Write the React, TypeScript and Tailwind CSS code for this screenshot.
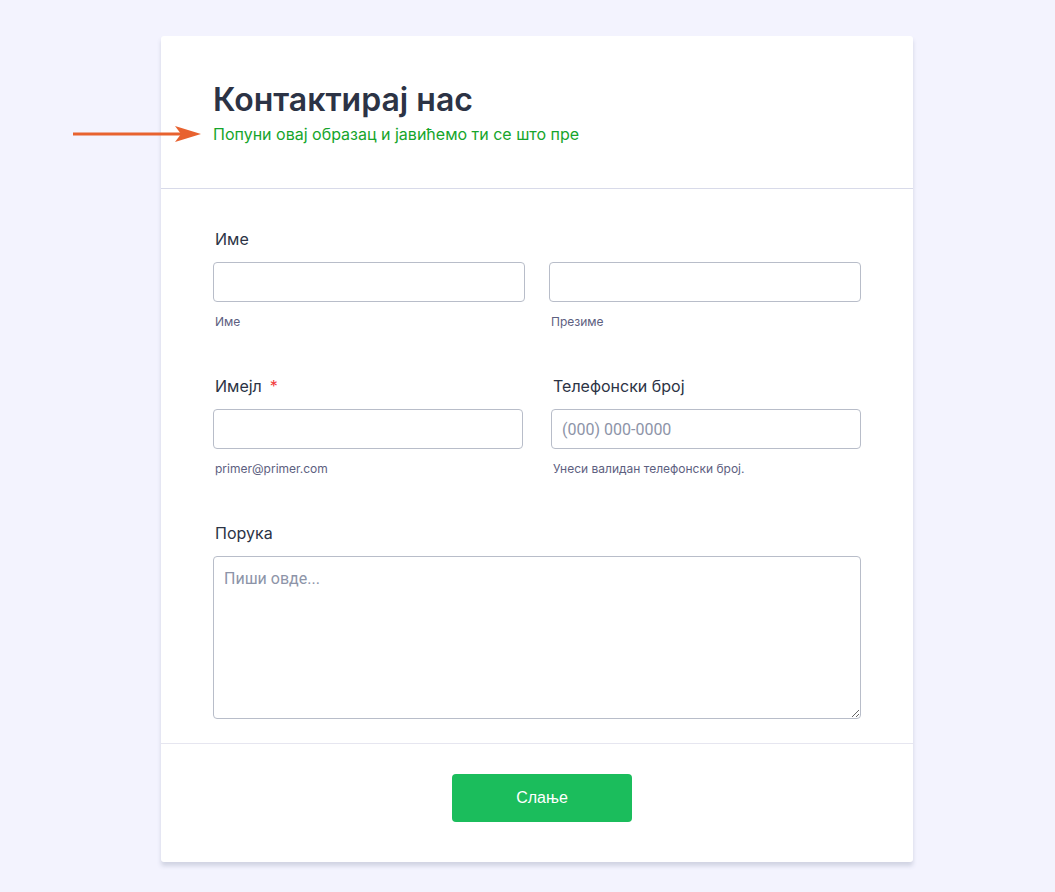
import React from "react";

const font = { fontFamily: "Inter, 'Noto Sans', sans-serif" };

function Field({ sub, placeholder, className }: { sub?: string; placeholder?: string; className?: string }) {
  return (
    <div className={className}>
      <input
        placeholder={placeholder}
        className="block w-full h-[40px] rounded-[4px] border border-[#b8bdc9] bg-white px-[10px] text-[16px] text-[#2c3345] placeholder:text-[#8d94a8] outline-none"
        style={{ fontFamily: "Roboto, Inter, sans-serif" }}
      />
      {sub && <div className="mt-[11px] ml-[2px] text-[12px] text-[#5d6080]">{sub}</div>}
    </div>
  );
}

const labelCls = "ml-[2px] text-[16px] leading-[20px] font-normal text-[#2c3345]";

export default function App() {
  return (
    <div className="min-h-[892px] bg-[#f3f3fe] pt-[36px] pb-[31px]" style={font}>
      <div className="relative ml-[161px] w-[752px] bg-white rounded-[3px] shadow-[0_4px_4px_rgba(87,100,126,0.21)]">
        {/* arrow pointing at the subtitle */}
        <svg className="absolute left-[-88px] top-[88px]" width="130" height="20" viewBox="0 0 130 20">
          <line x1="0" y1="10" x2="110" y2="10" stroke="#e8622f" strokeWidth="3" />
          <path d="M102 2 L128 10 L102 18 L108 10 Z" fill="#e8622f" />
        </svg>
        <div className="px-[52px] pt-[44px] pb-[45px] border-b border-[#d8dae9]">
          <h1 className="text-[32px] leading-[40px] font-semibold text-[#2c3345]">Контактирај нас</h1>
          <p className="mt-[5px] text-[16px] leading-[18px] text-[#16a52b]">Попуни овај образац и јавићемо ти се што пре</p>
        </div>
        <div className="px-[52px] pt-[40px] pb-[24px]">
          <div className={labelCls}>Име</div>
          <div className="mt-[13px] flex gap-[24px]">
            <Field sub="Име" className="flex-1" />
            <Field sub="Презиме" className="flex-1" />
          </div>
          <div className="mt-[45px] flex gap-[28px]">
            <div className="flex-1">
              <div className={labelCls}>
                Имејл<span className="ml-[8px] text-[#f23a3c]">*</span>
              </div>
              <Field sub="primer@primer.com" className="mt-[13px]" />
            </div>
            <div className="flex-1">
              <div className={labelCls}>Телефонски број</div>
              <Field sub="Унеси валидан телефонски број." placeholder="(000) 000-0000" className="mt-[13px]" />
            </div>
          </div>
          <div className={"mt-[45px] " + labelCls}>Порука</div>
          <textarea
            placeholder="Пиши овде..."
            className="mt-[13px] block w-full h-[163px] rounded-[4px] border border-[#b8bdc9] bg-white px-[10px] py-[10px] text-[16px] text-[#2c3345] placeholder:text-[#8d94a8] outline-none"
            style={{ fontFamily: "Roboto, Inter, sans-serif" }}
          />
        </div>
        <div className="border-t border-[#e6e6f0] pt-[30px] pb-[40px] pl-[10px] flex justify-center">
          <button
            className="w-[180px] h-[48px] rounded-[4px] bg-[#1bbd5c] text-white text-[16px]"
            style={{ fontFamily: "'Liberation Sans', Arial, sans-serif" }}
          >
            Слање
          </button>
        </div>
      </div>
    </div>
  );
}
